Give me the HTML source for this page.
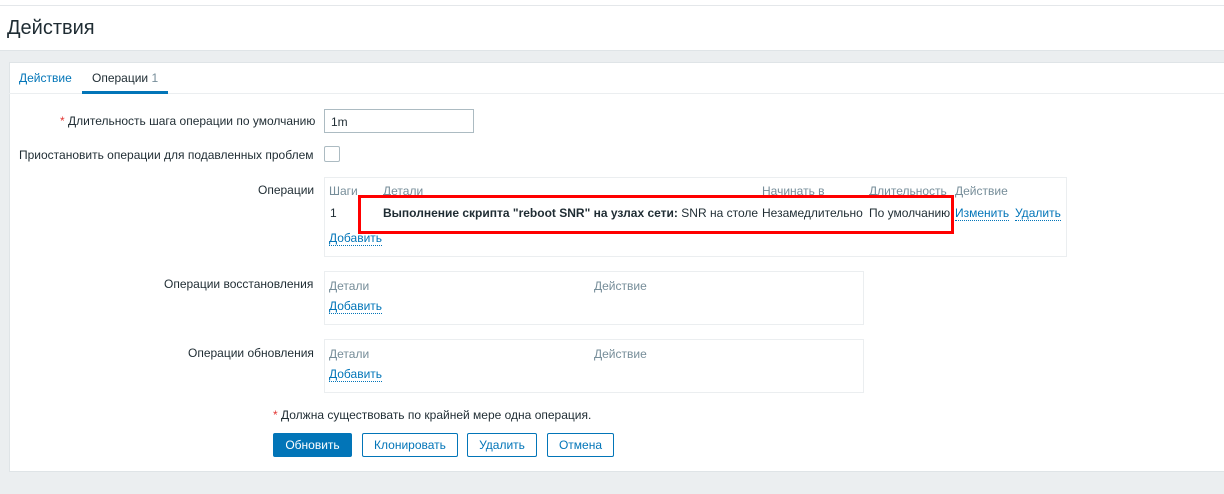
<!DOCTYPE html>
<html><head><meta charset="utf-8"><style>
*{box-sizing:border-box;margin:0;padding:0}
body{width:1224px;height:494px;background:#ebeef0;font-family:"Liberation Sans",Arial,sans-serif;font-size:12px;color:#1f2c33;position:relative;overflow:hidden}
.a{position:absolute;white-space:nowrap}
.hdr{position:absolute;left:0;top:0;width:1224px;height:51px;background:#fff;border-top:1px solid #fff;border-bottom:1px solid #dfe4e7}
.top{position:absolute;left:0;top:5px;width:1224px;height:1px;background:#e4e7ea}
.panel{position:absolute;left:9px;top:62px;width:1215px;height:410px;background:#fff;border:1px solid #dfe4e7;border-right:none}
.lnk{color:#0275b8;border-bottom:1px dotted #0275b8}
.gray{color:#768d99}
.box{position:absolute;border:1px solid #ebeef0;background:#fff}
.btn{position:absolute;top:433px;height:24px;border:1px solid #0275b8;color:#0275b8;background:#fff;text-align:center;line-height:22px;border-radius:2px}
</style></head><body>
<div class="hdr"></div><div class="top"></div>
<div class="a" style="left:7px;top:17px;font-size:20px;color:#1f2c33">Действия</div>
<div class="panel"></div>
<div class="a" style="left:9px;top:93px;width:1215px;height:1px;background:#ebeef0"></div>
<div class="a" style="left:19px;top:71px;color:#0275b8">Действие</div>
<div class="a" style="left:92px;top:71px">Операции <span class="gray">1</span></div>
<div class="a" style="left:82px;top:91px;width:86px;height:3px;background:#0275b8"></div>
<div class="a" style="left:60px;top:114px"><span style="color:#e33734">*</span> Длительность шага операции по умолчанию</div>
<div class="a" style="left:324px;top:109px;width:150px;height:24px;border:1px solid #acbbc2;padding:5px 6px">1m</div>
<div class="a" style="left:19px;top:148px">Приостановить операции для подавленных проблем</div>
<div class="a" style="left:324px;top:146px;width:16px;height:16px;border:1px solid #acbbc2;border-radius:2px"></div>
<div class="a" style="left:258px;top:183px">Операции</div>
<div class="box" style="left:324px;top:177px;width:743px;height:80px"></div>
<div class="a gray" style="left:329px;top:184px">Шаги</div>
<div class="a gray" style="left:383px;top:184px">Детали</div>
<div class="a gray" style="left:762px;top:184px">Начинать в</div>
<div class="a gray" style="left:869px;top:184px">Длительность</div>
<div class="a gray" style="left:955px;top:184px">Действие</div>
<div class="a" style="left:330px;top:206px">1</div>
<div class="a" style="left:383px;top:206px"><b>Выполнение скрипта "reboot SNR" на узлах сети:</b> SNR на столе</div>
<div class="a" style="left:762px;top:206px">Незамедлительно</div>
<div class="a" style="left:869px;top:206px">По умолчанию</div>
<div class="a lnk" style="left:955px;top:206px">Изменить</div>
<div class="a lnk" style="left:1015px;top:206px">Удалить</div>
<div class="a lnk" style="left:329px;top:231px">Добавить</div>
<div class="a" style="left:358px;top:195px;width:596px;height:39px;border:3px solid #f00"></div>
<div class="a" style="left:164px;top:277px">Операции восстановления</div>
<div class="box" style="left:324px;top:271px;width:540px;height:54px"></div>
<div class="a gray" style="left:329px;top:279px">Детали</div>
<div class="a gray" style="left:594px;top:279px">Действие</div>
<div class="a lnk" style="left:329px;top:299px">Добавить</div>
<div class="a" style="left:188px;top:346px">Операции обновления</div>
<div class="box" style="left:324px;top:339px;width:540px;height:54px"></div>
<div class="a gray" style="left:329px;top:347px">Детали</div>
<div class="a gray" style="left:594px;top:347px">Действие</div>
<div class="a lnk" style="left:329px;top:367px">Добавить</div>
<div class="a" style="left:273px;top:408px"><span style="color:#e33734">*</span> Должна существовать по крайней мере одна операция.</div>
<div class="btn" style="left:273px;width:79px;background:#0275b8;color:#fff">Обновить</div>
<div class="btn" style="left:362px;width:96px">Клонировать</div>
<div class="btn" style="left:467px;width:70px">Удалить</div>
<div class="btn" style="left:547px;width:67px">Отмена</div>
</body></html>
